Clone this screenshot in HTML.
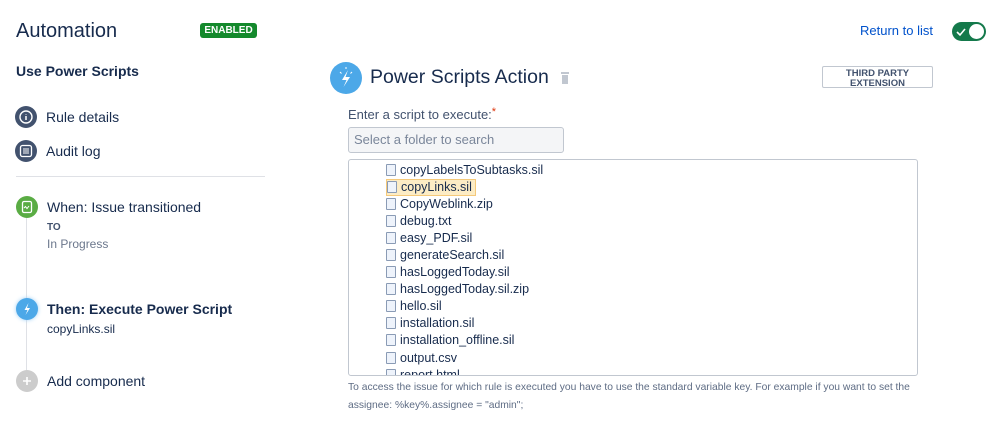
<!DOCTYPE html>
<html><head><meta charset="utf-8"><style>
*{margin:0;padding:0;box-sizing:border-box}
body{width:999px;height:422px;overflow:hidden;background:#fff;font-family:"Liberation Sans",Arial,sans-serif;color:#172b4d;position:relative}
.a{position:absolute;white-space:nowrap}
.ic{position:absolute;border-radius:50%}
.row{position:absolute;left:386px;height:17px;font-size:12.5px;line-height:17px;color:#172b4d}
.row i{display:inline-block;width:10px;height:12px;border:1px solid #8a9bb5;background:#eef3fb;vertical-align:-2px;margin-right:4px;border-radius:1px}
</style></head><body>
<div class="a" style="left:16px;top:20px;font-size:20px;color:#172b4d">Automation</div>
<div class="a" style="left:200px;top:23px;width:57px;height:15px;background:#14892c;border-radius:3px;color:#fff;font-size:10px;font-weight:bold;line-height:15px;text-align:center">ENABLED</div>
<div class="a" style="left:860px;top:23px;font-size:13px;color:#0052cc">Return to list</div>
<div class="a" style="left:952px;top:22px;width:34px;height:19px;border-radius:10px;background:#14794b"></div>
<div class="a" style="left:969px;top:24px;width:15px;height:15px;border-radius:50%;background:#fff"></div>
<svg class="a" style="left:955px;top:26px" width="12" height="12" viewBox="0 0 12 12"><path d="M2 6l3 3 5-6" stroke="#fff" stroke-width="1.6" fill="none"/></svg>

<div class="a" style="left:16px;top:63px;font-size:14px;font-weight:bold">Use Power Scripts</div>

<div class="ic" style="left:15px;top:106px;width:22px;height:22px;background:#42526e"></div>
<svg class="a" style="left:15px;top:106px" width="22" height="22"><circle cx="11" cy="11" r="6" stroke="#fff" stroke-width="1.4" fill="none"/><path d="M11 10v4M11 8v.5" stroke="#fff" stroke-width="1.5"/></svg>
<div class="a" style="left:46px;top:109px;font-size:14px">Rule details</div>
<div class="ic" style="left:15px;top:140px;width:22px;height:22px;background:#42526e"></div>
<svg class="a" style="left:15px;top:140px" width="22" height="22"><rect x="5.5" y="5.5" width="11" height="11" rx="2" stroke="#fff" stroke-width="1.3" fill="none"/><path d="M8 9h6M8 11h6M8 13h6" stroke="#fff" stroke-width="1"/></svg>
<div class="a" style="left:46px;top:143px;font-size:14px">Audit log</div>
<div class="a" style="left:16px;top:176px;width:249px;height:1px;background:#dfe1e6"></div>

<div class="a" style="left:26px;top:218px;width:1px;height:156px;background:#dfe1e6"></div>
<div class="ic" style="left:16px;top:196px;width:22px;height:22px;background:#5aac44"></div>
<svg class="a" style="left:16px;top:196px" width="22" height="22"><rect x="6.5" y="5.5" width="9" height="11" rx="1.5" stroke="#fff" stroke-width="1.3" fill="none"/><path d="M8 12l1.5-1.5 1.5 2 2-2.5" stroke="#fff" stroke-width="1" fill="none"/></svg>
<div class="a" style="left:47px;top:199px;font-size:14px">When: Issue transitioned</div>
<div class="a" style="left:47px;top:222px;font-size:10px;font-weight:bold;color:#42526e">TO</div>
<div class="a" style="left:47px;top:237px;font-size:12px;color:#6b778c">In Progress</div>

<div class="ic" style="left:16px;top:298px;width:22px;height:22px;background:#4ca8e8;box-shadow:0 0 4px #9fd0f5"></div>
<svg class="a" style="left:16px;top:298px" width="22" height="22"><path d="M12.5 5l-4 7h3l-2 5 4.5-7h-3z" fill="#fff"/></svg>
<div class="a" style="left:47px;top:301px;font-size:14px;font-weight:bold">Then: Execute Power Script</div>
<div class="a" style="left:47px;top:322px;font-size:12px">copyLinks.sil</div>

<div class="ic" style="left:16px;top:370px;width:22px;height:22px;background:#ccc"></div>
<svg class="a" style="left:16px;top:370px" width="22" height="22"><path d="M11 7v8M7 11h8" stroke="#fff" stroke-width="1.6"/></svg>
<div class="a" style="left:47px;top:373px;font-size:14px">Add component</div>

<div class="ic" style="left:330px;top:62px;width:32px;height:32px;background:#4ca8e8"></div>
<svg class="a" style="left:330px;top:62px" width="32" height="32"><path d="M18 8l-6 10h4.5l-3 7 6.5-10h-4.5z" fill="#fff"/><path d="M10 10l1.5 1.5M22 10l-1.5 1.5M16 5v2" stroke="#fff" stroke-width="1"/></svg>
<div class="a" style="left:370px;top:66px;font-size:19.5px;color:#172b4d">Power Scripts Action</div>
<svg class="a" style="left:560px;top:72px" width="10" height="12"><rect x="1" y="0" width="8" height="2" fill="#c1c7d0"/><rect x="2" y="3" width="6" height="9" fill="#c1c7d0"/></svg>
<div class="a" style="left:822px;top:66px;width:111px;height:22px;border:1px solid #c1c7d0;border-radius:2px;font-size:9.5px;font-weight:bold;color:#42526e;text-align:center;line-height:9.5px;padding-top:2px">THIRD PARTY<br>EXTENSION</div>

<div class="a" style="left:348px;top:106px;font-size:13px;color:#42526e">Enter a script to execute:<span style="color:#de350b;font-size:11px;vertical-align:4px">*</span></div>
<div class="a" style="left:348px;top:127px;width:216px;height:26px;background:#f4f5f7;border:1px solid #c1c7d0;border-radius:3px;font-size:13px;color:#7a869a;line-height:24px;padding-left:5px">Select a folder to search</div>

<div class="a" style="left:348px;top:159px;width:570px;height:217px;border:1px solid #c1c7d0;border-radius:3px;overflow:hidden">
</div>
<div class="a" style="left:349px;top:160px;width:568px;height:215px;overflow:hidden">
<div class="row" style="left:37px;top:2px"><i></i>copyLabelsToSubtasks.sil</div>
<div class="row" style="left:37px;top:19px;background:#fcecc5;border:1px solid #f5c97a;padding-right:3px;line-height:15px"><i></i>copyLinks.sil</div>
<div class="row" style="left:37px;top:36px"><i></i>CopyWeblink.zip</div>
<div class="row" style="left:37px;top:53px"><i></i>debug.txt</div>
<div class="row" style="left:37px;top:70px"><i></i>easy_PDF.sil</div>
<div class="row" style="left:37px;top:87px"><i></i>generateSearch.sil</div>
<div class="row" style="left:37px;top:104px"><i></i>hasLoggedToday.sil</div>
<div class="row" style="left:37px;top:121px"><i></i>hasLoggedToday.sil.zip</div>
<div class="row" style="left:37px;top:138px"><i></i>hello.sil</div>
<div class="row" style="left:37px;top:155px"><i></i>installation.sil</div>
<div class="row" style="left:37px;top:172px"><i></i>installation_offline.sil</div>
<div class="row" style="left:37px;top:190px"><i></i>output.csv</div>
<div class="row" style="left:37px;top:207px"><i></i>report.html</div>
</div>

<div class="a" style="left:348px;top:382px;font-size:10.3px;color:#5e6c84">To access the issue for which rule is executed you have to use the standard variable key. For example if you want to set the</div>
<div class="a" style="left:348px;top:400px;font-size:10.3px;color:#5e6c84">assignee: %key%.assignee = "admin";</div>
</body></html>
